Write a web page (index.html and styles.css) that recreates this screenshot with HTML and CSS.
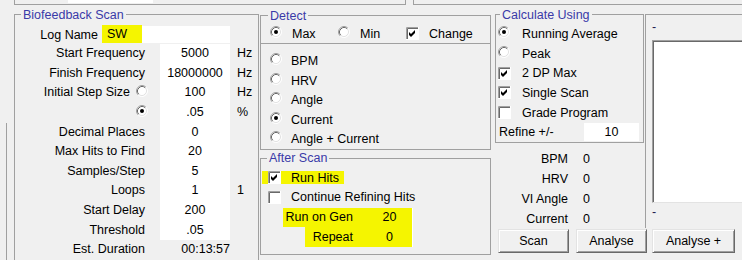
FILE: index.html
```html
<!DOCTYPE html>
<html>
<head>
<meta charset="utf-8">
<link rel="stylesheet" href="styles.css">
</head>
<body>
<div class="top">
  <div class="top-a"><div class="top-field"></div></div>
  <div class="top-b"></div>
</div>
<div class="main">
  <div class="edge"></div>

  <fieldset class="grp bio">
    <legend>Biofeedback Scan</legend>
    <div class="logrow">
      <div class="loglbl">Log Name</div>
      <div class="logbox"><span class="hl loghl">SW</span></div>
    </div>
    <div class="bgrid">
      <div class="bl">Start Frequency</div><div class="bv">5000</div><div class="bu">Hz</div>
      <div class="bl">Finish Frequency</div><div class="bv">18000000</div><div class="bu">Hz</div>
      <div class="bl rad"><span>Initial Step Size</span><svg class="rb" viewBox="0 0 12 12"><circle cx="6" cy="6" r="5" fill="#fff"/><path d="M2.11 9.89A5.5 5.5 0 0 1 9.89 2.11" stroke="#a0a0a0" fill="none"/><path d="M9.89 2.11A5.5 5.5 0 0 1 2.11 9.89" stroke="#fff" fill="none"/><path d="M2.82 9.18A4.5 4.5 0 0 1 9.18 2.82" stroke="#696969" fill="none"/><path d="M9.18 2.82A4.5 4.5 0 0 1 2.82 9.18" stroke="#e3e3e3" fill="none"/></svg></div><div class="bv">100</div><div class="bu">Hz</div>
      <div class="bl rad"><svg class="rb" viewBox="0 0 12 12"><circle cx="6" cy="6" r="5" fill="#fff"/><path d="M2.11 9.89A5.5 5.5 0 0 1 9.89 2.11" stroke="#a0a0a0" fill="none"/><path d="M9.89 2.11A5.5 5.5 0 0 1 2.11 9.89" stroke="#fff" fill="none"/><path d="M2.82 9.18A4.5 4.5 0 0 1 9.18 2.82" stroke="#696969" fill="none"/><path d="M9.18 2.82A4.5 4.5 0 0 1 2.82 9.18" stroke="#e3e3e3" fill="none"/><circle cx="6" cy="6" r="2" fill="#000"/></svg></div><div class="bv">.05</div><div class="bu">%</div>
      <div class="bl">Decimal Places</div><div class="bv">0</div><div class="bu"></div>
      <div class="bl">Max Hits to Find</div><div class="bv">20</div><div class="bu"></div>
      <div class="bl">Samples/Step</div><div class="bv">5</div><div class="bu"></div>
      <div class="bl">Loops</div><div class="bv">1</div><div class="bu">1</div>
      <div class="bl">Start Delay</div><div class="bv">200</div><div class="bu"></div>
      <div class="bl">Threshold</div><div class="bv">.05</div><div class="bu"></div>
      <div class="bl">Est. Duration</div><div class="bv est">00:13:57</div><div class="bu"></div>
    </div>
  </fieldset>

  <div class="mid">
    <fieldset class="grp detect">
      <legend>Detect</legend>
      <div class="d-top">
        <div class="d-item"><svg class="rb" viewBox="0 0 12 12"><circle cx="6" cy="6" r="5" fill="#fff"/><path d="M2.11 9.89A5.5 5.5 0 0 1 9.89 2.11" stroke="#a0a0a0" fill="none"/><path d="M9.89 2.11A5.5 5.5 0 0 1 2.11 9.89" stroke="#fff" fill="none"/><path d="M2.82 9.18A4.5 4.5 0 0 1 9.18 2.82" stroke="#696969" fill="none"/><path d="M9.18 2.82A4.5 4.5 0 0 1 2.82 9.18" stroke="#e3e3e3" fill="none"/><circle cx="6" cy="6" r="2" fill="#000"/></svg><span>Max</span></div>
        <div class="d-item"><svg class="rb" viewBox="0 0 12 12"><circle cx="6" cy="6" r="5" fill="#fff"/><path d="M2.11 9.89A5.5 5.5 0 0 1 9.89 2.11" stroke="#a0a0a0" fill="none"/><path d="M9.89 2.11A5.5 5.5 0 0 1 2.11 9.89" stroke="#fff" fill="none"/><path d="M2.82 9.18A4.5 4.5 0 0 1 9.18 2.82" stroke="#696969" fill="none"/><path d="M9.18 2.82A4.5 4.5 0 0 1 2.82 9.18" stroke="#e3e3e3" fill="none"/></svg><span>Min</span></div>
        <div class="d-item chk"><svg class="cb" viewBox="0 0 13 13"><rect width="13" height="13" fill="#fff"/><path d="M0.5 13V0.5H13" stroke="#a0a0a0" fill="none"/><path d="M1.5 12V1.5H12" stroke="#696969" fill="none"/><path d="M12.5 0V12.5H0" stroke="#fff" fill="none"/><polygon points="3,5 5,7 9,3 9,6 5,10 3,8" fill="#000"/></svg><span>Change</span></div>
      </div>
      <div class="d-list">
        <div class="opt"><svg class="rb" viewBox="0 0 12 12"><circle cx="6" cy="6" r="5" fill="#fff"/><path d="M2.11 9.89A5.5 5.5 0 0 1 9.89 2.11" stroke="#a0a0a0" fill="none"/><path d="M9.89 2.11A5.5 5.5 0 0 1 2.11 9.89" stroke="#fff" fill="none"/><path d="M2.82 9.18A4.5 4.5 0 0 1 9.18 2.82" stroke="#696969" fill="none"/><path d="M9.18 2.82A4.5 4.5 0 0 1 2.82 9.18" stroke="#e3e3e3" fill="none"/></svg><span>BPM</span></div>
        <div class="opt"><svg class="rb" viewBox="0 0 12 12"><circle cx="6" cy="6" r="5" fill="#fff"/><path d="M2.11 9.89A5.5 5.5 0 0 1 9.89 2.11" stroke="#a0a0a0" fill="none"/><path d="M9.89 2.11A5.5 5.5 0 0 1 2.11 9.89" stroke="#fff" fill="none"/><path d="M2.82 9.18A4.5 4.5 0 0 1 9.18 2.82" stroke="#696969" fill="none"/><path d="M9.18 2.82A4.5 4.5 0 0 1 2.82 9.18" stroke="#e3e3e3" fill="none"/></svg><span>HRV</span></div>
        <div class="opt"><svg class="rb" viewBox="0 0 12 12"><circle cx="6" cy="6" r="5" fill="#fff"/><path d="M2.11 9.89A5.5 5.5 0 0 1 9.89 2.11" stroke="#a0a0a0" fill="none"/><path d="M9.89 2.11A5.5 5.5 0 0 1 2.11 9.89" stroke="#fff" fill="none"/><path d="M2.82 9.18A4.5 4.5 0 0 1 9.18 2.82" stroke="#696969" fill="none"/><path d="M9.18 2.82A4.5 4.5 0 0 1 2.82 9.18" stroke="#e3e3e3" fill="none"/></svg><span>Angle</span></div>
        <div class="opt"><svg class="rb" viewBox="0 0 12 12"><circle cx="6" cy="6" r="5" fill="#fff"/><path d="M2.11 9.89A5.5 5.5 0 0 1 9.89 2.11" stroke="#a0a0a0" fill="none"/><path d="M9.89 2.11A5.5 5.5 0 0 1 2.11 9.89" stroke="#fff" fill="none"/><path d="M2.82 9.18A4.5 4.5 0 0 1 9.18 2.82" stroke="#696969" fill="none"/><path d="M9.18 2.82A4.5 4.5 0 0 1 2.82 9.18" stroke="#e3e3e3" fill="none"/><circle cx="6" cy="6" r="2" fill="#000"/></svg><span>Current</span></div>
        <div class="opt"><svg class="rb" viewBox="0 0 12 12"><circle cx="6" cy="6" r="5" fill="#fff"/><path d="M2.11 9.89A5.5 5.5 0 0 1 9.89 2.11" stroke="#a0a0a0" fill="none"/><path d="M9.89 2.11A5.5 5.5 0 0 1 2.11 9.89" stroke="#fff" fill="none"/><path d="M2.82 9.18A4.5 4.5 0 0 1 9.18 2.82" stroke="#696969" fill="none"/><path d="M9.18 2.82A4.5 4.5 0 0 1 2.82 9.18" stroke="#e3e3e3" fill="none"/></svg><span>Angle + Current</span></div>
      </div>
    </fieldset>

    <fieldset class="grp after">
      <legend>After Scan</legend>
      <div class="a-row r1"><span class="hl runhl"><svg class="cb" viewBox="0 0 13 13"><rect width="13" height="13" fill="#fff"/><path d="M0.5 13V0.5H13" stroke="#a0a0a0" fill="none"/><path d="M1.5 12V1.5H12" stroke="#696969" fill="none"/><path d="M12.5 0V12.5H0" stroke="#fff" fill="none"/><polygon points="3,5 5,7 9,3 9,6 5,10 3,8" fill="#000"/></svg><span>Run Hits</span></span></div>
      <div class="a-row r2"><svg class="cb" viewBox="0 0 13 13"><rect width="13" height="13" fill="#fff"/><path d="M0.5 13V0.5H13" stroke="#a0a0a0" fill="none"/><path d="M1.5 12V1.5H12" stroke="#696969" fill="none"/><path d="M12.5 0V12.5H0" stroke="#fff" fill="none"/></svg><span>Continue Refining Hits</span></div>
      <div class="gen">
        <div class="gl g1"><span class="hl">Run on Gen</span></div><div class="gv g1"><span class="hl">20</span></div>
        <div class="gl g2"><span class="hl">Repeat</span></div><div class="gv g2"><span class="hl">0</span></div>
      </div>
    </fieldset>
  </div>

  <div class="right">
    <fieldset class="grp calc">
      <legend>Calculate Using</legend>
      <div class="c-row"><svg class="rb" viewBox="0 0 12 12"><circle cx="6" cy="6" r="5" fill="#fff"/><path d="M2.11 9.89A5.5 5.5 0 0 1 9.89 2.11" stroke="#a0a0a0" fill="none"/><path d="M9.89 2.11A5.5 5.5 0 0 1 2.11 9.89" stroke="#fff" fill="none"/><path d="M2.82 9.18A4.5 4.5 0 0 1 9.18 2.82" stroke="#696969" fill="none"/><path d="M9.18 2.82A4.5 4.5 0 0 1 2.82 9.18" stroke="#e3e3e3" fill="none"/><circle cx="6" cy="6" r="2" fill="#000"/></svg><span>Running Average</span></div>
      <div class="c-row"><svg class="rb" viewBox="0 0 12 12"><circle cx="6" cy="6" r="5" fill="#fff"/><path d="M2.11 9.89A5.5 5.5 0 0 1 9.89 2.11" stroke="#a0a0a0" fill="none"/><path d="M9.89 2.11A5.5 5.5 0 0 1 2.11 9.89" stroke="#fff" fill="none"/><path d="M2.82 9.18A4.5 4.5 0 0 1 9.18 2.82" stroke="#696969" fill="none"/><path d="M9.18 2.82A4.5 4.5 0 0 1 2.82 9.18" stroke="#e3e3e3" fill="none"/></svg><span>Peak</span></div>
      <div class="c-row"><svg class="cb" viewBox="0 0 13 13"><rect width="13" height="13" fill="#fff"/><path d="M0.5 13V0.5H13" stroke="#a0a0a0" fill="none"/><path d="M1.5 12V1.5H12" stroke="#696969" fill="none"/><path d="M12.5 0V12.5H0" stroke="#fff" fill="none"/><polygon points="3,5 5,7 9,3 9,6 5,10 3,8" fill="#000"/></svg><span>2 DP Max</span></div>
      <div class="c-row"><svg class="cb" viewBox="0 0 13 13"><rect width="13" height="13" fill="#fff"/><path d="M0.5 13V0.5H13" stroke="#a0a0a0" fill="none"/><path d="M1.5 12V1.5H12" stroke="#696969" fill="none"/><path d="M12.5 0V12.5H0" stroke="#fff" fill="none"/><polygon points="3,5 5,7 9,3 9,6 5,10 3,8" fill="#000"/></svg><span>Single Scan</span></div>
      <div class="c-row"><svg class="cb" viewBox="0 0 13 13"><rect width="13" height="13" fill="#fff"/><path d="M0.5 13V0.5H13" stroke="#a0a0a0" fill="none"/><path d="M1.5 12V1.5H12" stroke="#696969" fill="none"/><path d="M12.5 0V12.5H0" stroke="#fff" fill="none"/></svg><span>Grade Program</span></div>
      <div class="c-row refine"><span class="rlbl">Refine +/-</span><span class="rbox">10</span></div>
    </fieldset>

    <div class="panel">
      <div class="dash">-</div>
      <div class="listbox"></div>
      <div class="dash d2">-</div>
    </div>

    <div class="stats">
      <div class="sl">BPM</div><div class="sv">0</div>
      <div class="sl">HRV</div><div class="sv">0</div>
      <div class="sl">VI Angle</div><div class="sv">0</div>
      <div class="sl">Current</div><div class="sv">0</div>
    </div>

    <div class="buttons">
      <button class="btn">Scan</button>
      <button class="btn b2">Analyse</button>
      <button class="btn b3">Analyse +</button>
    </div>
  </div>
</div>
</body>
</html>
```

FILE: styles.css
```css
html, body {
  margin: 0;
  padding: 0;
  width: 742px;
  height: 260px;
  overflow: hidden;
  background: #f0f0f0;
}
body {
  font-family: "Liberation Sans", Arial, sans-serif;
  font-size: 12.5px;
  color: #000;
}

/* top remnants */
.top {
  display: flex;
  height: 5px;
}
.top-a {
  box-sizing: border-box;
  margin-left: 14px;
  width: 392px;
  height: 5px;
  border: 1px solid #a0a0a0;
  border-top: none;
}
.top-field {
  margin-left: 53px;
  width: 85px;
  height: 3px;
  background: #fff;
}
.top-b {
  box-sizing: border-box;
  margin-left: 7px;
  flex: 1;
  height: 5px;
  border-left: 1px solid #a0a0a0;
  border-bottom: 1px solid #a0a0a0;
}

.main {
  display: flex;
  align-items: flex-start;
  height: 255px;
  overflow: hidden;
}
.edge {
  width: 1px;
  margin-left: 6px;
  margin-top: 118px;
  height: 137px;
  background: #a0a0a0;
  flex: none;
}

/* group boxes */
fieldset.grp {
  box-sizing: border-box;
  border: 1px solid #a0a0a0;
  margin: 0;
  padding: 0;
  min-width: 0;
}
fieldset.grp legend {
  padding: 0 2px;
  line-height: 14px;
  height: 14px;
  color: #3a3aa8;
}

.hl {
  background: #f5f500;
}

/* biofeedback */
.bio {
  flex: none;
  width: 245px;
  height: 252.5px;
  overflow: hidden;
  border-bottom: none !important;
  margin: 2.5px 0 0 7px !important;
  padding-top: 4.5px !important;
}
.bio legend { margin-left: 6px; }
.logrow {
  display: flex;
  height: 18px;
}
.loglbl {
  width: 83px;
  padding-right: 4px;
  text-align: right;
  line-height: 18px;
}
.logbox {
  width: 128px;
  height: 17px;
  background: #fff;
  display: flex;
}
.loghl {
  display: block;
  height: 18px;
  line-height: 18px;
  margin-top: -1px;
  padding: 0 15px 0 5px;
}
.bgrid {
  display: grid;
  grid-template-columns: 145px 70px 1fr;
  grid-auto-rows: 19.65px;
}
.bl {
  text-align: right;
  padding-right: 15px;
  line-height: 19.65px;
  white-space: nowrap;
}
.bl.rad {
  display: flex;
  justify-content: flex-end;
  align-items: flex-start;
  padding-right: 12px;
}
.bl.rad .rb {
  margin-top: 2px;
  margin-left: 6px;
}
.bv {
  background: #fff;
  text-align: center;
  line-height: 19.65px;
}
.bv.est {
  background: none;
  text-align: right;
}
.bu {
  padding-left: 7px;
  line-height: 19.65px;
}

.rb {
  width: 12px;
  height: 12px;
  flex: none;
  display: block;
}
.cb {
  width: 13px;
  height: 13px;
  flex: none;
  display: block;
}

/* middle column */
.mid {
  flex: none;
  width: 231px;
  margin-left: 1px;
  display: flex;
  flex-direction: column;
}
.detect {
  margin-top: 3.5px !important;
}
.detect legend { margin-left: 7px; }
.d-top {
  display: flex;
  height: 18px;
  margin-top: 2.5px;
  padding-left: 9px;
}
.d-item {
  display: flex;
  align-items: center;
  width: 68px;
}
.d-item .rb {
  margin-right: 10px;
  position: relative;
  top: -2px;
}
.d-item.chk .cb {
  margin-right: 10px;
  position: relative;
  top: -1px;
}
.d-list {
  border-top: 1px solid #a0a0a0;
  padding-top: 7.2px;
  padding-left: 9px;
}
.opt {
  display: flex;
  align-items: center;
  height: 19.6px;
}
.opt .rb {
  margin-right: 9px;
  position: relative;
  top: -2px;
}

.after {
  margin-top: 1.3px !important;
  padding: 3px 0 7.5px 0 !important;
}
.after legend { margin-left: 6px; }
.a-row {
  display: flex;
  align-items: center;
}
.a-row.r1 {
  height: 19px;
  padding-left: 1px;
}
.runhl {
  display: flex;
  align-items: center;
  height: 13px;
  padding: 0 5px 0 6px;
}
.runhl .cb { margin-right: 10px; }
.a-row.r2 {
  height: 19.5px;
  padding-left: 7px;
}
.a-row.r2 .cb { margin-right: 10px; }
.gen {
  display: grid;
  grid-template-columns: 106px 46px;
  grid-template-rows: 19px 20px;
  margin-top: 1px;
}
.gl {
  display: flex;
  justify-content: flex-end;
}
.gl .hl {
  display: block;
  line-height: 19px;
  padding: 0 14px 0 3px;
}
.gl.g2 .hl {
  line-height: 20px;
  padding-left: 8px;
}
.gv {
  background: #fff;
  display: flex;
}
.gv .hl {
  display: block;
  flex: 1;
  margin-right: 1px;
  text-align: center;
  line-height: 19px;
}
.gv.g2 .hl { line-height: 20px; }

/* right column */
.right {
  flex: none;
  margin-left: 4px;
  display: grid;
  grid-template-columns: 149px 97px;
  column-gap: 1px;
  align-items: start;
}
.calc {
  grid-column: 1;
  grid-row: 1;
  margin-top: 2.5px !important;
  padding: 2.5px 0 0 2px !important;
}
.calc legend { margin-left: 2px; }
.c-row {
  display: flex;
  align-items: center;
  height: 19.7px;
}
.c-row .rb {
  margin-right: 12px;
  position: relative;
  top: -2px;
}
.c-row .cb { margin-right: 11px; }
.c-row.refine {
  padding-left: 1px;
}
.rlbl { width: 85px; }
.rbox {
  width: 55px;
  height: 18px;
  line-height: 18px;
  background: #fff;
  text-align: center;
}

.panel {
  grid-column: 2;
  grid-row: 1 / 3;
  margin-top: 9px;
  border-top: 1px solid #a0a0a0;
  border-left: 1px solid #a0a0a0;
  padding: 4px 0 0 6px;
  height: 214px;
  box-sizing: border-box;
  overflow: hidden;
}
.dash {
  height: 16px;
  line-height: 16px;
  color: #1e1e50;
}
.dash.d2 { margin-top: 1px; }
.listbox {
  box-sizing: border-box;
  margin-top: 4.5px;
  width: 90px;
  height: 163px;
  background: #fff;
  border-top: 1px solid #a0a0a0;
  border-left: 1px solid #a0a0a0;
  border-bottom: 1px solid #e3e3e3;
  box-shadow: inset 1px 1px 0 #696969;
}

.stats {
  grid-column: 1;
  grid-row: 2;
  padding-top: 5.5px;
  display: grid;
  grid-template-columns: 73px 1fr;
  grid-auto-rows: 20px;
}
.sl {
  text-align: right;
  line-height: 20px;
}
.sv {
  padding-left: 15px;
  line-height: 20px;
}

.buttons {
  grid-column: 1 / 3;
  grid-row: 3;
  display: flex;
  padding-left: 3px;
  margin-top: 0.5px;
}
.btn {
  box-sizing: border-box;
  width: 71px;
  height: 24px;
  padding: 0;
  font: inherit;
  color: #000;
  background: #f0f0f0;
  border: 1px solid;
  border-color: #e3e3e3 #696969 #696969 #e3e3e3;
  box-shadow: inset 1px 1px 0 #fff, inset -1px -1px 0 #a0a0a0;
}
.btn.b2 { margin-left: 7px; }
.btn.b3 { margin-left: 5px; width: 83px; }
```
